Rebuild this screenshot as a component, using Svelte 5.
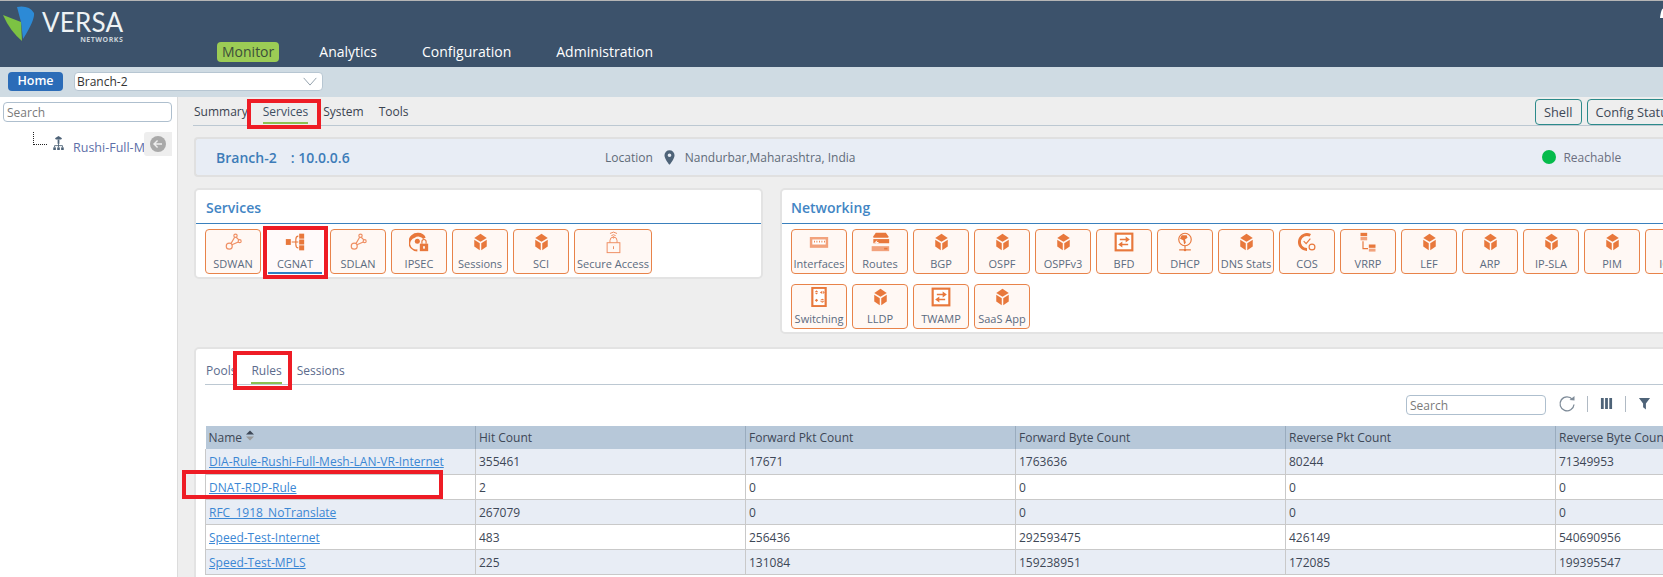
<script>
  const nav = ['Monitor', 'Analytics', 'Configuration', 'Administration'];
  const tabs = ['Summary', 'Services', 'System', 'Tools'];
  const services = [
    ['SDWAN', 'mesh'], ['CGNAT', 'nat'], ['SDLAN', 'mesh'], ['IPSEC', 'ipsec'],
    ['Sessions', 'cube'], ['SCI', 'cube'], ['Secure Access', 'secure']
  ];
  const networking = [
    ['Interfaces', 'iface'], ['Routes', 'routes'], ['BGP', 'cube'], ['OSPF', 'cube'], ['OSPFv3', 'cube'],
    ['BFD', 'bfd'], ['DHCP', 'dhcp'], ['DNS Stats', 'cube'], ['COS', 'cos'], ['VRRP', 'vrrp'],
    ['LEF', 'cube'], ['ARP', 'cube'], ['IP-SLA', 'cube'], ['PIM', 'cube'], ['IGMP', 'cube'],
    ['Switching', 'switch'], ['LLDP', 'cube'], ['TWAMP', 'bfd'], ['SaaS App', 'cube']
  ];
  const columns = ['Name', 'Hit Count', 'Forward Pkt Count', 'Forward Byte Count', 'Reverse Pkt Count', 'Reverse Byte Count'];
  const rows = [
    ['DIA-Rule-Rushi-Full-Mesh-LAN-VR-Internet', '355461', '17671', '1763636', '80244', '71349953'],
    ['DNAT-RDP-Rule', '2', '0', '0', '0', '0'],
    ['RFC_1918_NoTranslate', '267079', '0', '0', '0', '0'],
    ['Speed-Test-Internet', '483', '256436', '292593475', '426149', '540690956'],
    ['Speed-Test-MPLS', '225', '131084', '159238951', '172085', '199395547']
  ];
</script>

{#snippet icon(kind)}
  {#if kind === 'cube'}
    <svg class="ico narrow" viewBox="0 0 24 24" preserveAspectRatio="none">
      <polygon class="f" points="12,1 22,6.5 12,11.5 2,6.5" />
      <polygon class="f" points="2,9 10.8,13.6 10.8,23 2,18" />
      <polygon class="f" points="22,9 13.2,13.6 13.2,23 22,18" />
    </svg>
  {:else if kind === 'mesh'}
    <svg class="ico" viewBox="0 0 24 24">
      <g class="s soft">
        <circle cx="7.5" cy="17" r="3.6" />
        <circle cx="15" cy="4.5" r="2" />
        <circle cx="20" cy="11" r="1.8" />
        <path d="M9.5 14 14 6.3M10.7 15.3 18.4 12M15.8 6.3 19 9.5" />
      </g>
    </svg>
  {:else if kind === 'nat'}
    <svg class="ico" viewBox="0 0 24 24">
      <rect class="f" x="1" y="8.5" width="6" height="7" />
      <rect class="f" x="17" y="2" width="6" height="6" />
      <rect class="f" x="17" y="9" width="6" height="6" />
      <rect class="f" x="17" y="16" width="6" height="6" />
      <path class="s" d="M8 12H13M16 5Q13 5 13 9V15Q13 19 16 19M13 12H16" />
    </svg>
  {:else if kind === 'ipsec'}
    <svg class="ico" viewBox="0 0 24 24">
      <path class="f" d="M11 1a10 10 0 0 1 9 5.5l-3 2A7 7 0 0 0 7 7a7 7 0 0 0 3 13.8V23.500A11 11 0 0 1 11 1z" />
      <circle class="f" cx="10" cy="11" r="3" />
      <rect class="f" x="13" y="14" width="10" height="9" />
      <path class="s" d="M15.500 14v-2.500a2.500 2.500 0 0 1 5 0V14" />
      <rect class="w" x="17" y="17" width="2" height="3" />
    </svg>
  {:else if kind === 'secure'}
    <svg class="ico tall" viewBox="0 0 24 32">
      <g class="s soft">
        <path d="M7 4Q12 0 17 4M9 7Q12 4.500 15 7" />
        <circle cx="12" cy="9.500" r="1" />
        <path d="M7 17v-3a5 5 0 0 1 10 0v3" />
        <rect x="3" y="17" width="18" height="14" />
        <path d="M12 22v4" />
      </g>
    </svg>
  {:else if kind === 'iface'}
    <svg class="ico" viewBox="0 0 24 24">
      <rect class="lf" x="1" y="6" width="22" height="13" />
      <rect class="w" x="4" y="9" width="16" height="6" />
      <path class="s2" d="M6 11.500h1M9 11.500h1M12 11.500h1M15 11.500h1M18 11.500h1" />
    </svg>
  {:else if kind === 'routes'}
    <svg class="ico" viewBox="0 0 24 24">
      <path class="f" d="M7 1H19L22 5V7H4V5Z" />
      <rect class="f" x="4" y="8.500" width="19" height="5" />
      <rect class="lf" x="2" y="17" width="21" height="6" />
      <path class="w" d="M9 9.500 5 13h3l-1 2 4-3H8z" />
      <rect class="f" x="17" y="19" width="4" height="2" />
    </svg>
  {:else if kind === 'bfd'}
    <svg class="ico" viewBox="0 0 24 24">
      <rect class="sq" x="2" y="2" width="20" height="20" />
      <path class="f" d="M7 8h7V5.500l5 3.500-5 3.500V10H7zM17 16h-7v2.500L5 15l5-3.500V14h7z" />
    </svg>
  {:else if kind === 'dhcp'}
    <svg class="ico" viewBox="0 0 24 24">
      <circle class="s" cx="12" cy="9" r="7.500" />
      <path class="f" d="M8 4h6l1 3-3 2 1 4-2 2-1-5-4-2z" />
      <path class="s" d="M12 16.500V20M5 21.500h14" />
      <circle class="f" cx="12" cy="21.500" r="1.500" />
    </svg>
  {:else if kind === 'cos'}
    <svg class="ico" viewBox="0 0 24 24">
      <path class="thick" d="M16 4A9 9 0 1 0 12 21" />
      <path class="s" d="M8 11l3 3 5-6" />
      <circle class="s" cx="18" cy="18" r="3.500" />
    </svg>
  {:else if kind === 'vrrp'}
    <svg class="ico" viewBox="0 0 24 24">
      <rect class="f" x="3" y="1" width="8" height="4" />
      <rect class="lf" x="3" y="6" width="8" height="4" />
      <path class="s" d="M6 11v9h6" />
      <rect class="f" x="13" y="15" width="8" height="4" />
      <rect class="lf" x="13" y="20" width="8" height="3.500" />
    </svg>
  {:else if kind === 'switch'}
    <svg class="ico" viewBox="0 0 24 24" preserveAspectRatio="none">
      <rect class="sq" x="4" y="1" width="16" height="22" />
      <path class="f" d="M7 6h4l-2-2zM7 7h4l-2 2zM13 6.500l3-2v4zM17 6.500v-2l2 2-2 2zM7 16l2-2v4zM11 16l-2-2v4zM13 16h6l-3-2zM13 17h6l-3 2z" />
    </svg>
  {/if}
{/snippet}

{#snippet tile(item)}
  <button class="tile" class:current={item[0] === 'CGNAT'} class:wide={item[0] === 'Secure Access'}>
    <span class="slot">{@render icon(item[1])}</span>
    <span class="lbl">{item[0]}</span>
  </button>
{/snippet}

<div class="page">
  <header>
    <div class="logo">
      <svg class="mark" viewBox="0 0 36 40">
        <path class="blue" d="M15 6Q27 4 32 12Q33 19 21 38L19 21Z" />
        <path class="green" d="M1 14 19 21 20 40Q8 30 1 14Z" />
      </svg>
      <div class="word">
        <span class="versa">VERSA</span>
        <span class="networks">NETWORKS</span>
      </div>
    </div>
    <nav>
      {#each nav as n, i}
        <span class="nav-item" class:on={i === 0}>{n}</span>
      {/each}
    </nav>
    <svg class="bell" viewBox="0 0 12 12"><path d="M6 0C3 0 2 2 1 10h10C10 2 9 0 6 0z" /></svg>
  </header>

  <div class="subbar">
    <span class="home">Home</span>
    <div class="select">
      <span>Branch-2</span>
      <svg viewBox="0 0 16 10"><path d="M1 1 8 9 15 1" /></svg>
    </div>
  </div>

  <div class="body">
    <aside>
      <input class="search side" placeholder="Search" />
      <div class="tree">
        <span class="dots"></span>
        <svg class="org" viewBox="0 0 12 16">
          <path d="M6 0 10 2.500 9 4H3L2 2.500z" />
          <rect x="5" y="4" width="2" height="5" />
          <path class="line" d="M1.500 13V11H10.500V13M6 9V13" />
          <rect x="0" y="13" width="3" height="3" /><rect x="4.500" y="13" width="3" height="3" /><rect x="9" y="13" width="3" height="3" />
        </svg>
        <span class="node">Rushi-Full-Mesh</span>
        <span class="collapse">
          <svg viewBox="0 0 18 18">
            <circle cx="9" cy="9" r="9" />
            <path d="M13.500 9H5M8.500 5 4.500 9l4 4" />
          </svg>
        </span>
      </div>
    </aside>

    <main>
      <div class="topline">
        <div class="tabs">
          {#each tabs as t}
            <span class="tab" class:active={t === 'Services'}>{t}</span>
          {/each}
        </div>
        <div class="actions">
          <span class="act">Shell</span>
          <span class="act">Config Status</span>
        </div>
      </div>

      <section class="info">
        <div class="who"><span>Branch-2</span><span class="ip">: 10.0.0.6</span></div>
        <div class="loc">
          <span>Location</span>
          <svg viewBox="0 0 12 16"><path fill-rule="evenodd" d="M6 0a5.500 5.500 0 0 0-5.500 5.500C.5 9.500 6 16 6 16s5.500-6.500 5.500-10.500A5.500 5.500 0 0 0 6 0zm0 3.500a2 2 0 1 1 0 4 2 2 0 0 1 0-4z" /></svg>
          <span class="place">Nandurbar,Maharashtra, India</span>
        </div>
        <div class="status"><i></i><span>Reachable</span></div>
      </section>

      <div class="cards">
        <section class="card svc">
          <h2>Services</h2>
          <div class="tiles">
            {#each services as s}{@render tile(s)}{/each}
          </div>
        </section>
        <section class="card net">
          <h2>Networking</h2>
          <div class="tiles">
            {#each networking as s}{@render tile(s)}{/each}
          </div>
        </section>
      </div>

      <section class="card rules">
        <div class="subtabs">
          <span>Pools</span><span class="active">Rules</span><span>Sessions</span>
        </div>
        <div class="toolbar">
          <input class="search tool" placeholder="Search" />
          <svg class="tb refresh" viewBox="0 0 18 18"><path d="M14.500 4.500A7 7 0 1 0 16 9.500" /><path class="head" d="M11.500 5 16.500 5.500 16.500 1z" /></svg>
          <span class="sep"></span>
          <svg class="tb" viewBox="0 0 14 14"><path class="bars" d="M1 1h3v12H1zM5.500 1h3v12h-3zM10 1h3v12h-3z" /></svg>
          <span class="sep"></span>
          <svg class="tb" viewBox="0 0 14 14"><path class="bars" d="M1 1h12L8.500 7v6.500L5.500 11V7z" /></svg>
          <span class="sep"></span>
        </div>
        <table>
          <thead>
            <tr>
              {#each columns as c, i}
                <th>{c}{#if i === 0}<svg class="sort" viewBox="0 0 8 10"><path class="up" d="M4 0 8 4H0z" /><path class="down" d="M0 6h8L4 10z" /></svg>{/if}</th>
              {/each}
            </tr>
          </thead>
          <tbody>
            {#each rows as r}
              <tr>
                {#each r as v, i}
                  <td>{#if i === 0}<a href="#rule">{v}</a>{:else}{v}{/if}</td>
                {/each}
              </tr>
            {/each}
          </tbody>
        </table>
      </section>
    </main>
  </div>

  <div class="mark-box m1"></div>
  <div class="mark-box m2"></div>
  <div class="mark-box m3"></div>
  <div class="mark-box m4"></div>
</div>

<style>
  :global(body) { margin: 0; background: #fff; }
  .page {
    position: relative; width: 1663px; height: 577px; overflow: hidden;
    font-family: "Open Sans", "Noto Sans", sans-serif; font-size: 12px; color: #3d4756;
  }
  header {
    height: 66px; border-top: 1px solid #b5b5b5; background: #3c526b;
    display: flex; position: relative;
  }
  .logo { display: flex; width: 216px; flex: none; align-items: flex-start; padding-left: 2px; box-sizing: border-box; }
  .mark { width: 36px; height: 40px; }
  .blue { fill: #2c8ad6; }
  .green { fill: #7cc243; }
  .word { display: flex; flex-direction: column; align-items: flex-end; margin-left: 4px; padding-top: 9px; }
  .versa { font-family: Lato, sans-serif; font-weight: 400; font-size: 26px; line-height: 24px; color: #eef2f4; letter-spacing: .2px; }
  .networks { font-family: "Open Sans", sans-serif; font-weight: 700; font-size: 7px; line-height: 8px; color: #c9d2da; letter-spacing: .5px; margin-top: 2px; }
  nav { display: flex; align-items: center; align-self: flex-end; gap: 45px; margin-bottom: 5px; margin-left: 1px; }
  .nav-item { font-size: 14px; line-height: 20px; color: #fff; }
  .nav-item.on { background: #9ccc55; color: #3d4f3a; border-radius: 4px; padding: 0 5px; margin-right: -5px; }
  .bell { position: absolute; left: 1659px; top: 7px; width: 12px; height: 12px; fill: #fff; }

  .subbar { height: 30px; background: #cfdbe3; display: flex; align-items: flex-start; gap: 11px; padding: 5px 0 0 8px; box-sizing: border-box; }
  .home { width: 55px; height: 19px; background: #2b6cb8; color: #fff; border-radius: 4px; font-weight: 600; font-size: 12.500px; line-height: 18px; text-align: center; }
  .select { width: 249px; height: 19px; box-sizing: border-box; background: #fff; border: 1px solid #b7c6d2; border-radius: 4px; padding: 0 2px; line-height: 18px; font-size: 12px; display: flex; justify-content: space-between; align-items: center; color: #333; }
  .select svg { width: 16px; height: 9px; margin-right: 2px; fill: none; stroke: #8a98a5; stroke-width: 1; }

  .body { display: flex; height: 480px; }
  aside { width: 178px; flex: none; background: #fff; border-right: 1px solid #dcdcdc; box-sizing: border-box; padding: 5px 0 0 3px; }
  .search { box-sizing: border-box; border: 1px solid #aebfce; border-radius: 4px; background: #fff; padding: 0 3px; margin: 0; height: 20px; font: 12px "Open Sans", sans-serif; color: #666; outline: none; }
  .search::placeholder { color: #7a7a7a; opacity: 1; }
  .side { width: 169px; display: block; }
  .tree { position: relative; height: 30px; margin-top: 10px; display: flex; }
  .dots { width: 13px; height: 12px; border-left: 1px dotted #222; border-bottom: 1px dotted #222; margin-left: 30px; }
  .org { width: 11px; height: 14px; margin: 4px 0 0 6px; fill: #4e6378; }
  .org .line { fill: none; stroke: #4e6378; stroke-width: 1; }
  .node { margin: 7px 0 0 9px; font-size: 12.500px; color: #5d6fa8; white-space: nowrap; }
  .collapse { position: absolute; left: 141px; top: 0; width: 28px; height: 24px; background: #eeeeee; border-radius: 3px 0 0 3px; display: flex; align-items: center; justify-content: center; }
  .collapse svg { width: 16px; height: 16px; }
  .collapse circle { fill: #a9a9a9; }
  .collapse path { fill: none; stroke: #eee; stroke-width: 1.600; }

  main { flex: 1; min-width: 0; background: #eeeeee; padding: 0 0 0 15px; overflow: hidden; }
  .topline { height: 29px; box-sizing: border-box; border-bottom: 1px solid #bcc8d2; display: flex; width: 1470px; position: relative; }
  .tabs { display: flex; gap: 15px; padding: 6px 0 0 1px; }
  .tab { font-size: 12px; line-height: 17px; height: 21px; color: #3a4350; box-sizing: border-box; }
  .tab.active { border-bottom: 2px solid #8cc152; color: #3d4f63; margin-top: 0; }
  .actions { position: absolute; left: 1342px; top: 2px; display: flex; gap: 5px; }
  .act { box-sizing: border-box; height: 26px; border: 1px solid #2c8a8a; border-radius: 4px; padding: 0 8px; line-height: 24px; font-size: 12.800px; white-space: nowrap; color: #3d4756; background: #eee; }

  .info { margin: 11px 0 0 1px; width: 1469px; height: 40px; box-sizing: border-box; background: #e8edf5; border: solid #e0e0e0; border-width: 2px 0 2px 2px; border-radius: 4px 0 0 4px; display: flex; align-items: center; position: relative; }
  .who { width: 409px; padding-left: 20px; box-sizing: border-box; font-size: 14px; font-weight: 600; color: #3d7cb8; display: flex; flex: none; }
  .ip { margin-left: 14px; }
  .loc { display: flex; align-items: center; font-size: 12px; color: #5f6b78; }
  .loc svg { width: 11px; height: 15px; margin: 0 10px 0 11px; fill: #4e6378; }
  .status { display: flex; align-items: center; margin-left: 687px; color: #6b6f80; font-size: 12px; }
  .status i { width: 14px; height: 14px; border-radius: 50%; background: #05bb4b; margin-right: 7px; }

  .cards { display: flex; align-items: flex-start; gap: 17px; margin: 11px 0 0 1px; }
  .card { background: #fff; border: 2px solid #e3e3e3; border-radius: 5px; box-sizing: border-box; flex: none; }
  h2 { margin: 0; height: 34px; box-sizing: border-box; padding: 8px 0 0 10px; border-bottom: 1px solid #3a80bd; font-size: 14px; font-weight: 600; line-height: 19px; color: #4285c4; }
  .svc { width: 569px; height: 91px; }
  .net { width: 1000px; height: 146px; }
  .net h2 { padding-left: 9px; }
  .tiles { display: flex; flex-wrap: wrap; gap: 10px 5px; padding: 5px 9px 0 9px; width: 940px; box-sizing: border-box; }
  .svc .tiles { width: 560px; padding-left: 9px; }
  .tile { width: 56px; height: 45px; padding: 1px 0 0; margin: 0; box-sizing: border-box; border: 1px solid #e8834a; border-radius: 4px; background: #fff8f4; display: flex; flex-direction: column; align-items: center; font-family: inherit; }
  .tile.wide { width: 78px; }
  .tile.current { width: 54px; margin: 0 3px 0 2px; border: none; border-bottom: 2px solid #2f80c3; background: #fffafa; border-radius: 0; padding-top: 2px; }
  .slot { height: 22px; display: flex; align-items: center; justify-content: center; }
  .lbl { font-size: 11px; line-height: 16px; margin-top: 3px; color: #5b6b80; white-space: nowrap; }

  .ico { width: 20px; height: 20px; }
  .ico.narrow { width: 15px; height: 18px; }
  .ico.tall { width: 17px; height: 24px; }
  .f { fill: #e8783c; }
  .lf { fill: #f2a27c; }
  .w { fill: #fff; }
  .s { fill: none; stroke: #e8783c; stroke-width: 1.400; }
  .s.soft { stroke: #ef8f63; }
  .s2 { fill: none; stroke: #e8783c; stroke-width: 2; }
  .sq { fill: #fff; stroke: #e8783c; stroke-width: 2.600; }
  .thick { fill: none; stroke: #e8783c; stroke-width: 3.400; }

  .rules { margin: 13px 0 0 1px; width: 1600px; height: 240px; padding: 0 0 0 9px; }
  .subtabs { display: flex; gap: 15px; height: 36px; box-sizing: border-box; border-bottom: 1px solid #bcc8d2; padding: 13px 0 0 1px; font-size: 12px; line-height: 17px; color: #5b6b8c; }
  .subtabs span { height: 22px; box-sizing: border-box; }
  .subtabs .active { border-bottom: 2px solid #8cc152; }
  .toolbar { display: flex; align-items: center; height: 41px; padding: 0 0 1px 1201px; box-sizing: border-box; }
  .tool { width: 140px; }
  .tb { width: 13px; height: 13px; flex: none; margin-bottom: 3px; }
  .refresh { width: 18px; height: 18px; margin: 0 11px 3px 12px; fill: none; stroke: #7f8c99; stroke-width: 1.300; }
  .refresh .head { fill: #7f8c99; stroke: none; }
  .bars { fill: #4e6378; }
  .sep { width: 1px; height: 16px; background: #b0bac4; margin: 0 12px 3px; flex: none; }
  .toolbar .sep:first-of-type { margin-left: 0; }

  table { border-collapse: collapse; table-layout: fixed; width: 1620px; font-size: 12px; }
  th { height: 23px; width: 270px; box-sizing: border-box; background: #b7c8d9; font-weight: 400; text-align: left; padding: 1px 3px 0; border-right: 1px solid #9aacbe; color: #3d4756; line-height: 20px; }
  td { height: 25px; box-sizing: border-box; padding: 2px 3px 0; border: 1px solid #c9c9c9; border-top: none; color: #3d4756; line-height: 18px; white-space: nowrap; }
  tbody tr:nth-child(odd) td { background: #e8edf5; }
  a { color: #3b87d4; text-decoration: underline; }
  .sort { width: 8px; height: 11px; margin-left: 4px; vertical-align: 1px; }
  .up { fill: #3d4756; }
  .down { fill: #9a9a9a; }

  .mark-box { position: absolute; box-sizing: border-box; border: 4px solid #ee1c25; pointer-events: none; }
  .m1 { left: 247px; top: 99px; width: 74px; height: 30px; }
  .m2 { left: 263px; top: 226px; width: 65px; height: 53px; }
  .m3 { left: 233px; top: 351px; width: 59px; height: 39px; }
  .m4 { left: 182px; top: 470px; width: 261px; height: 29px; }
</style>
